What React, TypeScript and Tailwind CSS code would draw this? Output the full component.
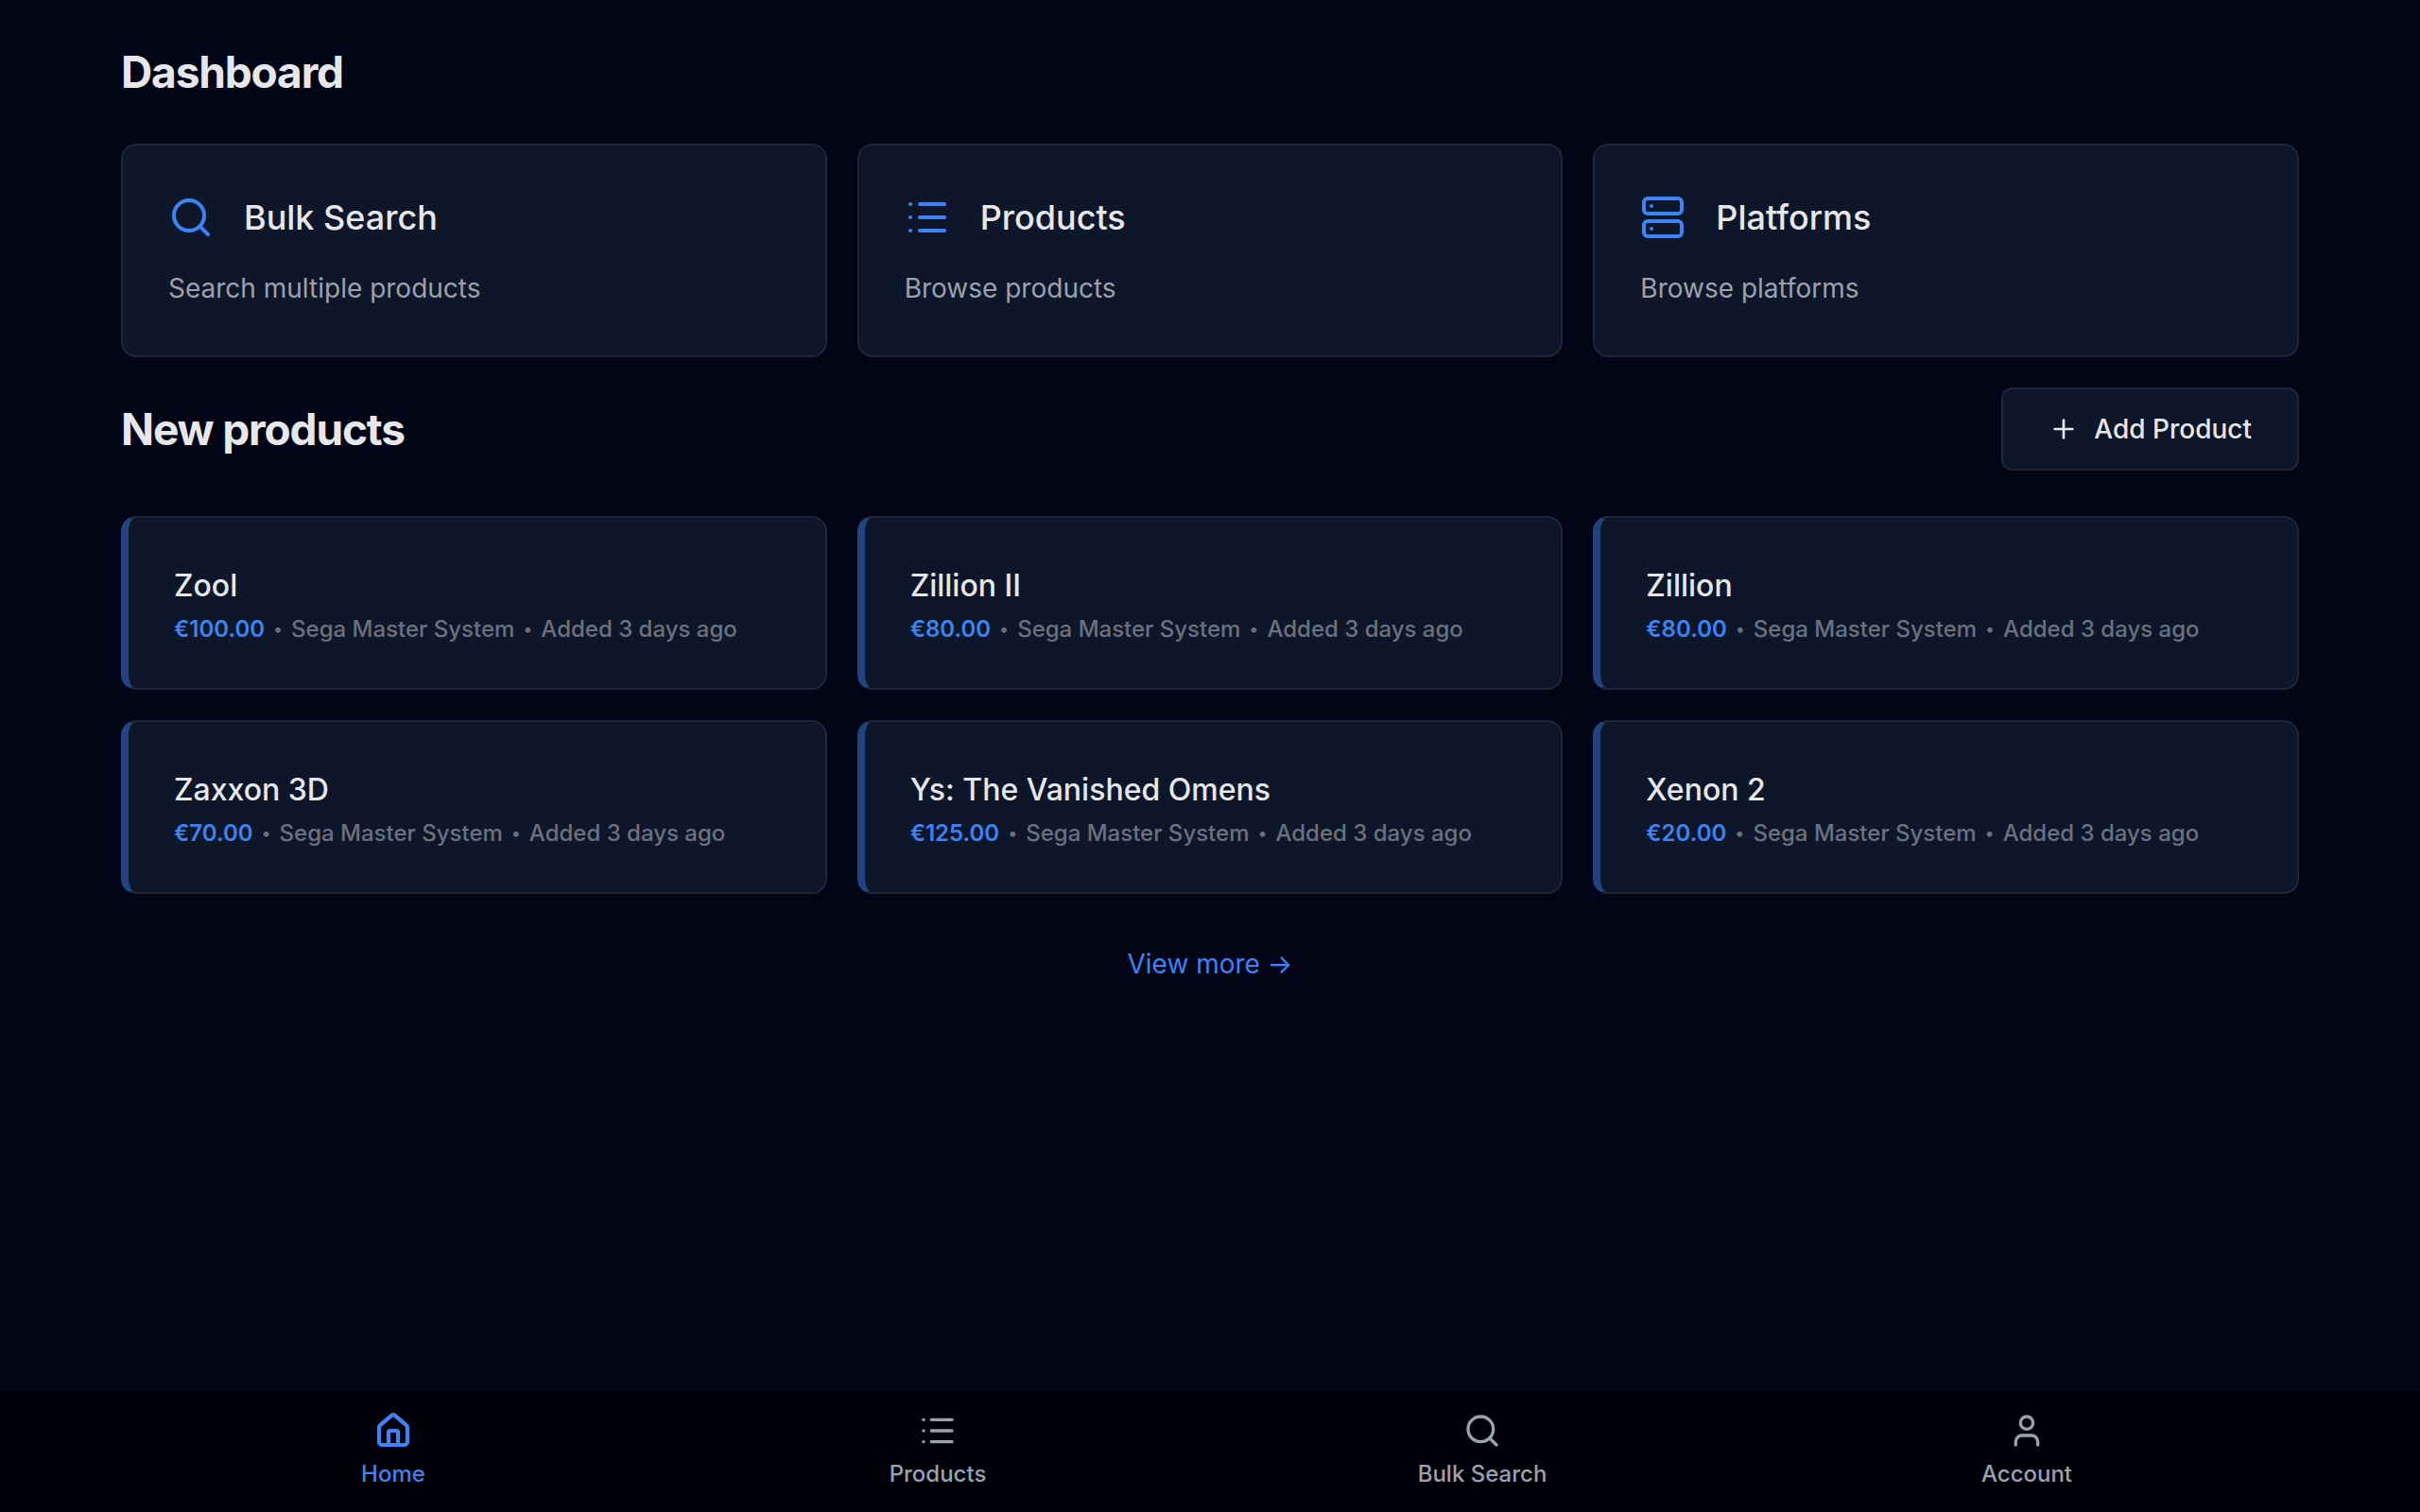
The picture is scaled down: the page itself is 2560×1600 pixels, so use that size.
import { House, List, Plus, Search, Server, User, type LucideIcon } from "lucide-react";

type Shortcut = {
  title: string;
  description: string;
  href: string;
  Icon: LucideIcon;
};

type Product = {
  name: string;
  price: string;
  platform: string;
  added: string;
};

type NavItem = {
  label: string;
  href: string;
  Icon: LucideIcon;
  active?: boolean;
};

const shortcuts: Shortcut[] = [
  {
    title: "Bulk Search",
    description: "Search multiple products",
    href: "#search",
    Icon: Search,
  },
  {
    title: "Products",
    description: "Browse products",
    href: "#products",
    Icon: List,
  },
  {
    title: "Platforms",
    description: "Browse platforms",
    href: "#platforms",
    Icon: Server,
  },
];

const platform = "Sega Master System";
const added = "Added 3 days ago";

const products: Product[] = [
  { name: "Zool", price: "€100.00", platform, added },
  { name: "Zillion II", price: "€80.00", platform, added },
  { name: "Zillion", price: "€80.00", platform, added },
  { name: "Zaxxon 3D", price: "€70.00", platform, added },
  { name: "Ys: The Vanished Omens", price: "€125.00", platform, added },
  { name: "Xenon 2", price: "€20.00", platform, added },
];

const navItems: NavItem[] = [
  { label: "Home", href: "#home", Icon: House, active: true },
  { label: "Products", href: "#products", Icon: List },
  { label: "Bulk Search", href: "#search", Icon: Search },
  { label: "Account", href: "#account", Icon: User },
];

function ShortcutCard({ title, description, href, Icon }: Shortcut) {
  return (
    <a
      href={href}
      className="block rounded-2xl border-2 border-[#1e2735] bg-[#0e1729] p-12"
    >
      <div className="flex items-center gap-8">
        <Icon className="size-12 text-[#3c83f6]" />
        <h2 className="text-[36px] leading-14 font-medium">{title}</h2>
      </div>
      <p className="mt-6 text-[28px] leading-[46px] text-[#9ba2ae]">
        {description}
      </p>
    </a>
  );
}

function Dot() {
  return <span className="w-3 text-center text-lg leading-8">•</span>;
}

function ProductCard({ name, price, platform, added }: Product) {
  return (
    <a
      href="#product"
      className="block rounded-2xl border-2 border-l-8 border-[#1e2735] border-l-[#214380] bg-[#0e1729] px-12 pt-[50px] pb-[46px]"
    >
      <h3 className="text-[32px] leading-11 font-medium">{name}</h3>
      <p className="mt-2 flex gap-2 text-2xl leading-8 font-medium text-[#6a717f]">
        <span className="font-semibold text-[#3c83f6]">{price}</span>
        <Dot />
        <span>{platform}</span>
        <Dot />
        <span>{added}</span>
      </p>
    </a>
  );
}

export default function App() {
  return (
    <div className="flex min-h-screen flex-col bg-[#020515] font-['Inter',sans-serif] text-[#e6e7eb]">
      <main className="flex-1 px-32 py-12">
        <h1 className="mb-12 text-[46px] leading-14 font-bold tracking-tight">
          Dashboard
        </h1>
        <div className="grid grid-cols-3 gap-8">
          {shortcuts.map((shortcut) => (
            <ShortcutCard key={shortcut.title} {...shortcut} />
          ))}
        </div>

        <div className="mt-8 mb-12 flex items-center justify-between">
          <h2 className="text-[46px] leading-14 font-bold tracking-tight">
            New products
          </h2>
          <button
            type="button"
            className="flex h-22 items-center gap-4 rounded-xl border-2 border-[#1e2735] bg-[#0e1729] px-12 text-[28px] font-medium"
          >
            <Plus className="size-8" />
            Add Product
          </button>
        </div>
        <div className="grid grid-cols-3 gap-8">
          {products.map((product) => (
            <ProductCard key={product.name} {...product} />
          ))}
        </div>

        <div className="mt-12 text-center">
          <a href="#products" className="text-[28px] leading-[52px] text-[#3c83f6]">
            View more →
          </a>
        </div>
      </main>

      <nav className="sticky bottom-0 grid h-32 grid-cols-4 bg-[#00000a] px-32">
        {navItems.map(({ label, href, Icon, active }) => (
          <a
            key={label}
            href={href}
            className={`flex flex-col items-center justify-center gap-2 text-2xl leading-9 font-medium ${
              active ? "text-[#3c83f6]" : "text-[#9ba2ae]"
            }`}
          >
            <Icon className="size-10" strokeWidth={active ? 2.5 : 2} />
            {label}
          </a>
        ))}
      </nav>
    </div>
  );
}
